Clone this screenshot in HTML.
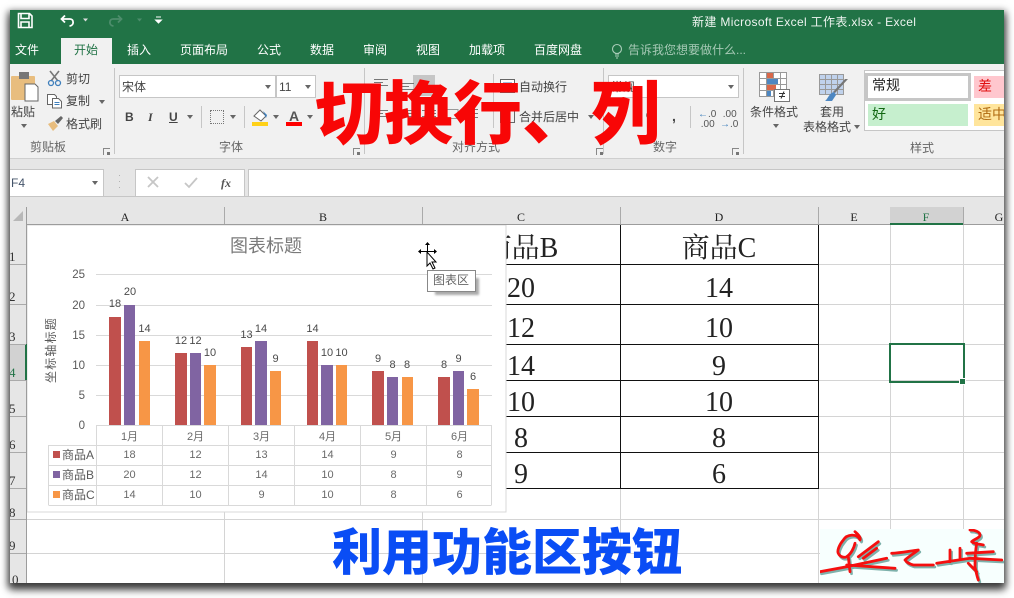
<!DOCTYPE html>
<html lang="zh"><head><meta charset="utf-8"><style>
html,body{margin:0;padding:0;background:#fff}
body{width:1014px;height:598px;position:relative;overflow:hidden;font-family:"Liberation Sans","Noto Sans CJK SC",sans-serif}
#w{position:absolute;left:10px;top:10px;width:994px;height:573px;background:#fff;box-shadow:0 3px 7px 2px rgba(0,0,0,.62),0 7px 8px rgba(0,0,0,.45)}
#s{position:absolute;left:0;top:0;width:1014px;height:598px;overflow:hidden;clip-path:inset(10px 10px 15px 10px)}
.a{position:absolute}
.t{position:absolute;white-space:nowrap;line-height:16px;font-size:12px;color:#444}
.c{transform:translateX(-50%)}
.tab{color:#fff;top:42px}
.h{position:absolute;background:#d4d4d4}
.b{position:absolute;background:#111}
.n{position:absolute;white-space:nowrap;font:28px/32px "Liberation Serif","Noto Serif CJK SC",serif;color:#222;transform:translateX(-50%)}
.ch{position:absolute;top:209px;font:12px/16px "Liberation Serif",serif;color:#222;transform:translateX(-50%)}
.rn{position:absolute;left:9px;font:13px/16px "Liberation Serif",serif;color:#333}
.sep{position:absolute;width:1px;background:#c6c6c6}
.car{position:absolute;width:0;height:0;border:3.5px solid transparent;border-top:4px solid #666;border-bottom:0}
.lau{position:absolute;width:6px;height:6px;border-left:1px solid #888;border-top:1px solid #888}
.lau:after{content:"";position:absolute;right:0;bottom:0;width:3px;height:3px;background:#777}
.big{position:absolute;white-space:nowrap;font-family:"Noto Sans CJK SC",sans-serif;font-weight:900}
svg text{font-family:"Liberation Sans","Noto Sans CJK SC",sans-serif}
</style></head><body>
<div id="w"></div>
<div id="s">
<!-- title bar -->
<div class="a" style="left:10px;top:10px;width:994px;height:54px;background:#217346"></div>
<svg class="a" style="left:10px;top:10px" width="170" height="28" fill="none">
<path d="M8.500 3.500h11l2.500 2.500v11.500h-13.500z" stroke="#fff" stroke-width="1.600"/><path d="M11 4v4.500h8V4M11 17v-5h8v5" stroke="#fff" stroke-width="1.600"/>
<path d="M55 5.500l-3.500 3.500 3.500 3.500M52 9h8c4 0 4.500 6.500-.5 7" stroke="#fff" stroke-width="1.800"/>
<path d="M73 8.500l5 0-2.500 3z" fill="#ddd"/>
<path d="M108 5.500l3.500 3.500-3.500 3.500M111 9h-8c-4 0-4.500 6.500 .5 7" stroke="#4d8d6c" stroke-width="1.800"/>
<path d="M127 8.500l5 0-2.500 3z" fill="#4d8d6c"/>
<path d="M146 7h5M145.500 10h6l-3 3z" stroke="#fff" fill="#fff"/>
</svg>
<div class="t" style="left:692px;top:14px;color:#eef4f0;letter-spacing:.35px">新建 Microsoft Excel 工作表.xlsx - Excel</div>
<div class="a" style="left:61px;top:38px;width:51px;height:26px;background:#f1f1f1"></div>
<div class="t tab" style="left:15px">文件</div>
<div class="t tab" style="left:74px;color:#217346">开始</div>
<div class="t tab" style="left:127px">插入</div>
<div class="t tab" style="left:180px">页面布局</div>
<div class="t tab" style="left:257px">公式</div>
<div class="t tab" style="left:310px">数据</div>
<div class="t tab" style="left:363px">审阅</div>
<div class="t tab" style="left:416px">视图</div>
<div class="t tab" style="left:469px">加载项</div>
<div class="t tab" style="left:534px">百度网盘</div>
<svg class="a" style="left:611px;top:43px" width="12" height="16" fill="none" stroke="#a9ccb8" stroke-width="1.100"><circle cx="6" cy="6" r="4.500"/><path d="M4 11h4M4 13h4M5 15h2"/></svg>
<div class="t tab" style="left:628px;color:#a6c9b5">告诉我您想要做什么...</div>
<!-- ribbon -->
<div class="a" style="left:10px;top:64px;width:994px;height:94px;background:#f1f1f1;border-bottom:1px solid #cfcfcf"></div>
<div class="a" style="left:10px;top:159px;width:994px;height:65px;background:#e6e6e6"></div>
<!-- clipboard -->
<svg class="a" style="left:10px;top:70px" width="32" height="34"><rect x="1" y="6" width="24" height="24" rx="1" fill="#e8bd7e"/><rect x="9" y="2" width="10" height="7" fill="#777"/><path d="M15 14h10l3 3v14h-13z" fill="#fff" stroke="#666"/></svg>
<div class="t" style="left:11px;top:104px">粘贴</div><div class="car" style="left:21px;top:124px"></div>
<svg class="a" style="left:47px;top:70px" width="16" height="17" fill="none"><path d="M3 1l8 10M12 1l-8 10" stroke="#777" stroke-width="1.600"/><circle cx="4" cy="13" r="2.500" stroke="#3f7fbc" stroke-width="1.300"/><circle cx="11" cy="13" r="2.500" stroke="#3f7fbc" stroke-width="1.300"/></svg>
<div class="t" style="left:66px;top:71px">剪切</div>
<svg class="a" style="left:47px;top:93px" width="16" height="16" fill="#fff" stroke="#666"><path d="M.5 1.500h7l2 2v8h-9z"/><path d="M5.500 5.500h6l3 3v6.500h-9z"/><path d="M7.500 9.500h5M7.500 11.500h5" stroke="#3f7fbc"/></svg>
<div class="t" style="left:66px;top:93px">复制</div><div class="car" style="left:99px;top:100px"></div>
<svg class="a" style="left:47px;top:116px" width="16" height="15"><path d="M1 8l6-3 4 5-5 5z" fill="#e8bd7e"/><path d="M8 5l6-5 2 2-5 6z" fill="#666"/></svg>
<div class="t" style="left:66px;top:116px">格式刷</div>
<div class="t" style="left:30px;top:139px;color:#666">剪贴板</div>
<div class="lau" style="left:103px;top:148px"></div><div class="sep" style="left:114px;top:68px;height:86px"></div>
<!-- font -->
<div class="a" style="left:119px;top:75px;width:155px;height:21px;background:#fff;border:1px solid #c6c6c6"></div>
<div class="a" style="left:276px;top:75px;width:38px;height:21px;background:#fff;border:1px solid #c6c6c6"></div>
<div class="t" style="left:122px;top:79px">宋体</div><div class="t" style="left:279px;top:79px">11</div>
<div class="car" style="left:265px;top:85px"></div><div class="car" style="left:305px;top:85px"></div>
<div class="t" style="left:125px;top:109px;font-weight:bold">B</div>
<div class="t" style="left:148px;top:109px;font:italic bold 12px/16px 'Liberation Serif',serif;color:#444">I</div>
<div class="t" style="left:169px;top:109px;text-decoration:underline;font-weight:bold">U</div>
<div class="car" style="left:187px;top:115px"></div><div class="sep" style="left:201px;top:106px;height:22px"></div>
<div class="a" style="left:210px;top:110px;width:12px;height:12px;border:1px dotted #777"></div><div class="car" style="left:230px;top:115px"></div>
<div class="sep" style="left:244px;top:106px;height:22px"></div>
<svg class="a" style="left:252px;top:108px" width="17" height="18"><path d="M2 8l6-6 6 6-5 5z" fill="#fff" stroke="#666"/><path d="M11 3l4 4-1 3z" fill="#3f7fbc"/><rect y="14" width="16" height="4" fill="#ffd118"/></svg>
<div class="car" style="left:273px;top:115px"></div>
<div class="t" style="left:289px;top:108px;font-size:14px;font-weight:bold;color:#555">A</div><div class="a" style="left:286px;top:122px;width:16px;height:4px;background:#f00"></div>
<div class="car" style="left:307px;top:115px"></div>
<div class="t" style="left:219px;top:139px;color:#666">字体</div>
<div class="lau" style="left:353px;top:148px"></div><div class="sep" style="left:364px;top:68px;height:86px"></div>
<!-- alignment -->
<div class="a" style="left:413px;top:75px;width:22px;height:21px;background:#c6c6c6"></div>
<svg class="a" style="left:372px;top:76px" width="130" height="50" stroke="#777" fill="none"><path d="M2 3.500h14M2 6.500h9M2 9.500h14M28 7.500h14M28 10.500h9M28 13.500h14M45 12.500h14M45 15.500h14M2 34.500h14M2 37.500h9M2 40.500h14M28 34.500h14M30 37.500h10M28 40.500h14M50 34.500h14M55 37.500h9M50 40.500h14M92 33.500h14M92 37.500h14M92 41.500h14"/><path d="M74 33.500h12v9h-12z" stroke="#999"/></svg>
<div class="sep" style="left:493px;top:74px;height:54px"></div>
<svg class="a" style="left:500px;top:78px" width="15" height="46" fill="#fff" stroke="#666"><path d="M.5 1.500h14v13h-14z"/><path d="M3 5h9M3 8h7" stroke="#3f7fbc"/><path d="M.5 31.500h14v13h-14zM5.500 31.500v13M9.500 31.500v13" fill="none"/></svg>
<div class="t" style="left:519px;top:79px">自动换行</div>
<div class="t" style="left:519px;top:109px">合并后居中</div><div class="car" style="left:588px;top:115px"></div>
<div class="t" style="left:452px;top:139px;color:#666">对齐方式</div>
<div class="lau" style="left:596px;top:148px"></div><div class="sep" style="left:603px;top:68px;height:86px"></div>
<!-- number -->
<div class="a" style="left:608px;top:75px;width:129px;height:21px;background:#fff;border:1px solid #c6c6c6"></div>
<div class="t" style="left:611px;top:79px">常规</div><div class="car" style="left:728px;top:85px"></div>
<div class="t" style="left:646px;top:109px;font-weight:bold">%</div>
<div class="t" style="left:672px;top:108px;font-weight:bold;font-size:14px">,</div>
<div class="sep" style="left:690px;top:106px;height:22px"></div>
<div class="t" style="left:698px;top:110px;font-size:10px;line-height:10px;color:#3f7fbc">←<span style="color:#555">.0</span><br><span style="color:#555">&nbsp;.00</span></div>
<div class="t" style="left:720px;top:110px;font-size:10px;line-height:10px;color:#555">&nbsp;.00<br><span style="color:#3f7fbc">→</span>.0</div>
<div class="t" style="left:653px;top:139px;color:#666">数字</div>
<div class="lau" style="left:732px;top:148px"></div><div class="sep" style="left:743px;top:68px;height:86px"></div>
<!-- styles -->
<svg class="a" style="left:759px;top:71px" width="32" height="32"><path d="M.5 1.500h27v24h-27zM.5 7.500h27M.5 13.500h27M.5 19.500h27M7.500 1.500v24M14.500 1.500v24M21.500 1.500v24" fill="#fff" stroke="#999"/><rect x="8" y="2" width="6" height="5" fill="#d9684a"/><rect x="8" y="8" width="11" height="5" fill="#4d87c2"/><rect x="8" y="14" width="9" height="5" fill="#d9684a"/><rect x="8" y="20" width="4" height="5" fill="#4d87c2"/><rect x="15.500" y="18.500" width="15" height="12" fill="#fff" stroke="#777"/><path d="M20 22.500h6M20 25.500h6M25 20.500l-3 7" stroke="#333"/></svg>
<div class="t" style="left:750px;top:104px">条件格式</div><div class="car" style="left:773px;top:124px"></div>
<svg class="a" style="left:818px;top:73px" width="32" height="30"><path d="M1.500 1.500h24v20h-24z" fill="#c0d2ec"/><path d="M1.500 1.500h24v20h-24zM1.500 6.500h24M1.500 11.500h24M1.500 16.500h24M7.500 1.500v20M13.500 1.500v20M19.500 1.500v20" fill="none" stroke="#999"/><path d="M30 6l-13 14-2-1 12-13z" fill="#777"/><path d="M16 19l2 3-4 6H7c3-2 4-8 9-9z" fill="#4d87c2"/></svg>
<div class="t" style="left:820px;top:104px">套用</div><div class="t" style="left:803px;top:119px">表格格式</div><div class="car" style="left:854px;top:125px"></div>
<div class="a" style="left:864px;top:70px;width:140px;height:61px;background:#fff;border:1px solid #c6c6c6;border-right:0;box-sizing:border-box"></div>
<div class="a" style="left:865px;top:73px;width:100px;height:22px;border:3px solid #c6c6c6;background:#fff"></div>
<div class="t" style="left:872px;top:77px;font-size:14px;color:#222">常规</div>
<div class="a" style="left:974px;top:76px;width:30px;height:22px;background:#ffc7ce"></div><div class="t" style="left:978px;top:78px;font-size:14px;color:#e01010">差</div>
<div class="a" style="left:868px;top:104px;width:100px;height:22px;background:#c6efce"></div><div class="t" style="left:872px;top:106px;font-size:14px;color:#116611">好</div>
<div class="a" style="left:974px;top:104px;width:30px;height:22px;background:#ffe59c"></div><div class="t" style="left:978px;top:106px;font-size:14px;color:#b06a10">适中</div>
<div class="t" style="left:910px;top:140px;color:#666">样式</div>
<!-- formula bar -->
<div class="a" style="left:10px;top:169px;width:93px;height:26px;background:#fff;border:1px solid #c6c6c6;border-left:0"></div>
<div class="t" style="left:11px;top:175px;color:#44546a">F4</div><div class="car" style="left:92px;top:181px"></div>
<div class="t" style="left:118px;top:172px;color:#aaa;font-size:9px;line-height:6px">·<br>·<br>·</div>
<div class="a" style="left:135px;top:169px;width:108px;height:26px;background:#fff;border:1px solid #c6c6c6"></div>
<svg class="a" style="left:146px;top:175px" width="90" height="16" fill="none" stroke="#c6c6c6" stroke-width="1.800"><path d="M2 2l10 10M12 2L2 12M39 8l4 4 8-9"/></svg>
<div class="t" style="left:221px;top:175px;font:italic bold 12px/16px 'Liberation Serif',serif;color:#555">fx</div>
<div class="a" style="left:248px;top:169px;width:756px;height:26px;background:#fff;border:1px solid #c6c6c6;border-right:0"></div>
<div class="a" style="left:10px;top:196px;width:994px;height:1px;background:#c6c6c6"></div>
<!-- headers -->
<div class="a" style="left:26px;top:224px;width:978px;height:1px;background:#9c9c9c"></div>
<div class="a" style="left:26px;top:207px;width:1px;height:376px;background:#9c9c9c"></div>
<div class="a" style="left:13px;top:211px;width:0;height:0;border-left:10px solid transparent;border-bottom:10px solid #b8b8b8"></div>
<div class="a" style="left:10px;top:224px;width:16px;height:359px;background:#e6e6e6"></div>
<div class="a" style="left:224px;top:207px;width:1px;height:17px;background:#aaa"></div><div class="a" style="left:422px;top:207px;width:1px;height:17px;background:#aaa"></div><div class="a" style="left:620px;top:207px;width:1px;height:17px;background:#aaa"></div><div class="a" style="left:818px;top:207px;width:1px;height:17px;background:#aaa"></div><div class="a" style="left:963px;top:207px;width:1px;height:17px;background:#aaa"></div>
<div class="a" style="left:890px;top:207px;width:73px;height:16px;background:#d2d2d2;border-bottom:2px solid #217346"></div>
<div class="ch" style="left:125px">A</div><div class="ch" style="left:323px">B</div><div class="ch" style="left:521px">C</div><div class="ch" style="left:719px">D</div><div class="ch" style="left:854px">E</div><div class="ch" style="left:926px;color:#217346">F</div><div class="ch" style="left:999px">G</div>
<div class="a" style="left:10px;top:344px;width:15px;height:36px;background:#d2d2d2;border-right:2px solid #217346;box-sizing:content-box"></div>
<div class="h" style="left:10px;top:264px;width:16px;height:1px;background:#aaa"></div><div class="h" style="left:10px;top:304px;width:16px;height:1px;background:#aaa"></div><div class="h" style="left:10px;top:344px;width:16px;height:1px;background:#aaa"></div><div class="h" style="left:10px;top:380px;width:16px;height:1px;background:#aaa"></div><div class="h" style="left:10px;top:416px;width:16px;height:1px;background:#aaa"></div><div class="h" style="left:10px;top:452px;width:16px;height:1px;background:#aaa"></div><div class="h" style="left:10px;top:488px;width:16px;height:1px;background:#aaa"></div><div class="h" style="left:10px;top:519px;width:16px;height:1px;background:#aaa"></div><div class="h" style="left:10px;top:553px;width:16px;height:1px;background:#aaa"></div>
<div class="rn" style="top:249px">1</div><div class="rn" style="top:289px">2</div><div class="rn" style="top:329px">3</div><div class="rn" style="top:365px;color:#217346">4</div><div class="rn" style="top:401px">5</div><div class="rn" style="top:437px">6</div><div class="rn" style="top:473px">7</div><div class="rn" style="top:505px">8</div><div class="rn" style="top:538px">9</div><div class="rn" style="top:572px;left:12px">0</div>
<!-- gridlines -->
<div class="h" style="left:27px;top:264px;width:977px;height:1px"></div><div class="h" style="left:27px;top:304px;width:977px;height:1px"></div><div class="h" style="left:27px;top:344px;width:977px;height:1px"></div><div class="h" style="left:27px;top:380px;width:977px;height:1px"></div><div class="h" style="left:27px;top:416px;width:977px;height:1px"></div><div class="h" style="left:27px;top:452px;width:977px;height:1px"></div><div class="h" style="left:27px;top:488px;width:977px;height:1px"></div><div class="h" style="left:27px;top:519px;width:977px;height:1px"></div><div class="h" style="left:27px;top:553px;width:977px;height:1px"></div>
<div class="h" style="left:224px;top:225px;width:1px;height:358px"></div><div class="h" style="left:422px;top:225px;width:1px;height:358px"></div><div class="h" style="left:620px;top:225px;width:1px;height:358px"></div><div class="h" style="left:818px;top:225px;width:1px;height:358px"></div><div class="h" style="left:890px;top:225px;width:1px;height:358px"></div><div class="h" style="left:963px;top:225px;width:1px;height:358px"></div>
<!-- table -->
<div class="b" style="left:500px;top:264px;width:319px;height:1px"></div><div class="b" style="left:500px;top:304px;width:319px;height:1px"></div><div class="b" style="left:500px;top:344px;width:319px;height:1px"></div><div class="b" style="left:500px;top:380px;width:319px;height:1px"></div><div class="b" style="left:500px;top:416px;width:319px;height:1px"></div><div class="b" style="left:500px;top:452px;width:319px;height:1px"></div><div class="b" style="left:500px;top:488px;width:319px;height:1px"></div>
<div class="b" style="left:620px;top:225px;width:1px;height:264px"></div><div class="b" style="left:818px;top:225px;width:1px;height:264px"></div>
<div class="n" style="left:521px;top:233px">商品B</div><div class="n" style="left:719px;top:233px">商品C</div>
<div class="n" style="left:521px;top:273px">20</div><div class="n" style="left:719px;top:273px">14</div>
<div class="n" style="left:521px;top:313px">12</div><div class="n" style="left:719px;top:313px">10</div>
<div class="n" style="left:521px;top:351px">14</div><div class="n" style="left:719px;top:351px">9</div>
<div class="n" style="left:521px;top:387px">10</div><div class="n" style="left:719px;top:387px">10</div>
<div class="n" style="left:521px;top:423px">8</div><div class="n" style="left:719px;top:423px">8</div>
<div class="n" style="left:521px;top:459px">9</div><div class="n" style="left:719px;top:459px">6</div>
<!-- selection -->
<div class="a" style="left:889px;top:343px;width:72px;height:36px;border:2px solid #217346"></div>
<div class="a" style="left:959px;top:378px;width:5px;height:5px;background:#217346;border:1px solid #fff"></div>
<!-- chart -->
<svg class="a" style="left:27px;top:225px" width="480" height="288" viewBox="27 225 480 288">
<rect x="27" y="225" width="479" height="287" fill="#fff" stroke="#d9d9d9"/>
<text x="266" y="252" font-size="18" fill="#7a7a7a" text-anchor="middle">图表标题</text>
<g stroke="#d9d9d9"><path d="M96 274.500h396M96 305.500h396M96 335.500h396M96 365.500h396M96 395.500h396M96 425.500h396M96.500 425v80M162.500 425v80M228.500 425v80M294.500 425v80M360.500 425v80M426.500 425v80M491.500 425v80M48.500 445.500h443M48.500 465.500h443M48.500 485.500h443M48.500 505.500h443M48.500 445v60" fill="none"/></g>
<g font-size="11.500" fill="#595959" text-anchor="end"><text x="85" y="278">25</text><text x="85" y="309">20</text><text x="85" y="339">15</text><text x="85" y="369">10</text><text x="85" y="399">5</text><text x="85" y="429">0</text></g>
<text transform="translate(55,350) rotate(-90)" font-size="12" fill="#595959" text-anchor="middle" letter-spacing="1.200">坐标轴标题</text>
<g fill="#c0504d"><rect x="109" y="317" width="12" height="108"/><rect x="175" y="353" width="12" height="72"/><rect x="241" y="347" width="11" height="78"/><rect x="307" y="341" width="11" height="84"/><rect x="372" y="371" width="12" height="54"/><rect x="438" y="377" width="12" height="48"/></g>
<g fill="#8064a2"><rect x="124" y="305" width="11" height="120"/><rect x="190" y="353" width="11" height="72"/><rect x="255" y="341" width="12" height="84"/><rect x="321" y="365" width="12" height="60"/><rect x="387" y="377" width="11" height="48"/><rect x="453" y="371" width="11" height="54"/></g>
<g fill="#f79646"><rect x="139" y="341" width="11" height="84"/><rect x="204" y="365" width="12" height="60"/><rect x="270" y="371" width="11" height="54"/><rect x="336" y="365" width="11" height="60"/><rect x="402" y="377" width="11" height="48"/><rect x="467" y="389" width="12" height="36"/></g>
<g font-size="11" fill="#4a4a4a" text-anchor="middle">
<text x="115" y="307">18</text><text x="130" y="295">20</text><text x="144.500" y="332">14</text>
<text x="181" y="344">12</text><text x="195.500" y="344">12</text><text x="210" y="356">10</text>
<text x="246.500" y="338">13</text><text x="261" y="332">14</text><text x="275.500" y="362">9</text>
<text x="312.500" y="332">14</text><text x="327" y="356">10</text><text x="341.500" y="356">10</text>
<text x="378" y="362">9</text><text x="392.500" y="368">8</text><text x="407" y="368">8</text>
<text x="444" y="368">8</text><text x="458.500" y="362">9</text><text x="473" y="380">6</text>
</g>
<g font-size="11" fill="#6a6a6a" text-anchor="middle">
<text x="129.500" y="440">1月</text><text x="195.500" y="440">2月</text><text x="261.500" y="440">3月</text><text x="327.500" y="440">4月</text><text x="393.500" y="440">5月</text><text x="459.500" y="440">6月</text>
<text x="129.500" y="458">18</text><text x="195.500" y="458">12</text><text x="261.500" y="458">13</text><text x="327.500" y="458">14</text><text x="393.500" y="458">9</text><text x="459.500" y="458">8</text>
<text x="129.500" y="478">20</text><text x="195.500" y="478">12</text><text x="261.500" y="478">14</text><text x="327.500" y="478">10</text><text x="393.500" y="478">8</text><text x="459.500" y="478">9</text>
<text x="129.500" y="498">14</text><text x="195.500" y="498">10</text><text x="261.500" y="498">9</text><text x="327.500" y="498">10</text><text x="393.500" y="498">8</text><text x="459.500" y="498">6</text>
</g>
<rect x="53" y="451" width="7" height="7" fill="#c0504d"/><rect x="53" y="471" width="7" height="7" fill="#8064a2"/><rect x="53" y="491" width="7" height="7" fill="#f79646"/>
<g font-size="12" fill="#595959"><text x="62" y="459">商品A</text><text x="62" y="479">商品B</text><text x="62" y="499">商品C</text></g>
</svg>
<!-- tooltip and cursor -->
<div class="a" style="left:435px;top:278px;width:44px;height:17px;background:#aaa;filter:blur(1px)"></div>
<div class="a" style="left:427px;top:270px;width:47px;height:20px;background:#fff;border:1px solid #888"></div>
<div class="t" style="left:433px;top:272px;font-size:12px;color:#666">图表区</div>
<svg class="a" style="left:418px;top:242px" width="24" height="30"><path d="M9.500 1v18M1 9.500h16" stroke="#000"/><path d="M9.500 0l-2.500 3h5zM0 9.500l3-2.500v5zM19 9.500l-3-2.500v5z"/><path d="M9 10v14l3-3 3 6 2-1-3-6h4z" fill="#fff" stroke="#000"/></svg>
<!-- overlays -->
<div class="big" style="left:315px;top:58px;font-size:69px;line-height:100px;color:#f80606">切换行、列</div>
<div class="big" style="left:332px;top:512px;font-size:50px;line-height:74px;color:#0a4df5">利用功能区按钮</div>
<!-- signature -->
<div class="a" style="left:820px;top:529px;width:184px;height:54px;background:#f7fffe"></div>
<svg class="a" style="left:820px;top:529px" width="184" height="54" fill="none" stroke-linecap="round" stroke-linejoin="round">
<g stroke="#5f9d96" stroke-width="2.800" transform="translate(1.500,2)" opacity=".8"><path d="M0 42.700L26.700 37.700 66.700 29.300M26.700 36L75 39.300M35 2.700C39 6 41 9 40 11 37 4 27 5 23.300 11 19 16 17 22 18.300 24.300 20 28 24 29 26.700 27.700 31 25 34 19 35 14.300M28.300 27.700L30 42.700M38.300 27.700L58.300 12.700M43.300 29.300L56.700 19.300M71.700 24.300C80 24 90 22 98.300 21 93 25 88 28 85 31 87 34 90 35 93.300 36L113.300 36M116.700 34.300L150 29.300 181.700 31M130 21V32.700M140 29.300V19.300M150 1C155 1 160 3 160 6 160 9 154 10 151.700 12.700 154 15 159 15 163.300 16M146.700 24.300L173.300 22.700M156.700 14.300C155 24 155 31 155 37.700 156 43 157 47 158.300 51M148.300 34.300L156.700 42.700"/></g>
<g stroke="#f50f0f" stroke-width="2.800"><path d="M0 42.700L26.700 37.700 66.700 29.300M26.700 36L75 39.300M35 2.700C39 6 41 9 40 11 37 4 27 5 23.300 11 19 16 17 22 18.300 24.300 20 28 24 29 26.700 27.700 31 25 34 19 35 14.300M28.300 27.700L30 42.700M38.300 27.700L58.300 12.700M43.300 29.300L56.700 19.300M71.700 24.300C80 24 90 22 98.300 21 93 25 88 28 85 31 87 34 90 35 93.300 36L113.300 36M116.700 34.300L150 29.300 181.700 31M130 21V32.700M140 29.300V19.300M150 1C155 1 160 3 160 6 160 9 154 10 151.700 12.700 154 15 159 15 163.300 16M146.700 24.300L173.300 22.700M156.700 14.300C155 24 155 31 155 37.700 156 43 157 47 158.300 51M148.300 34.300L156.700 42.700"/></g>
</svg>
</div>
</body></html>
